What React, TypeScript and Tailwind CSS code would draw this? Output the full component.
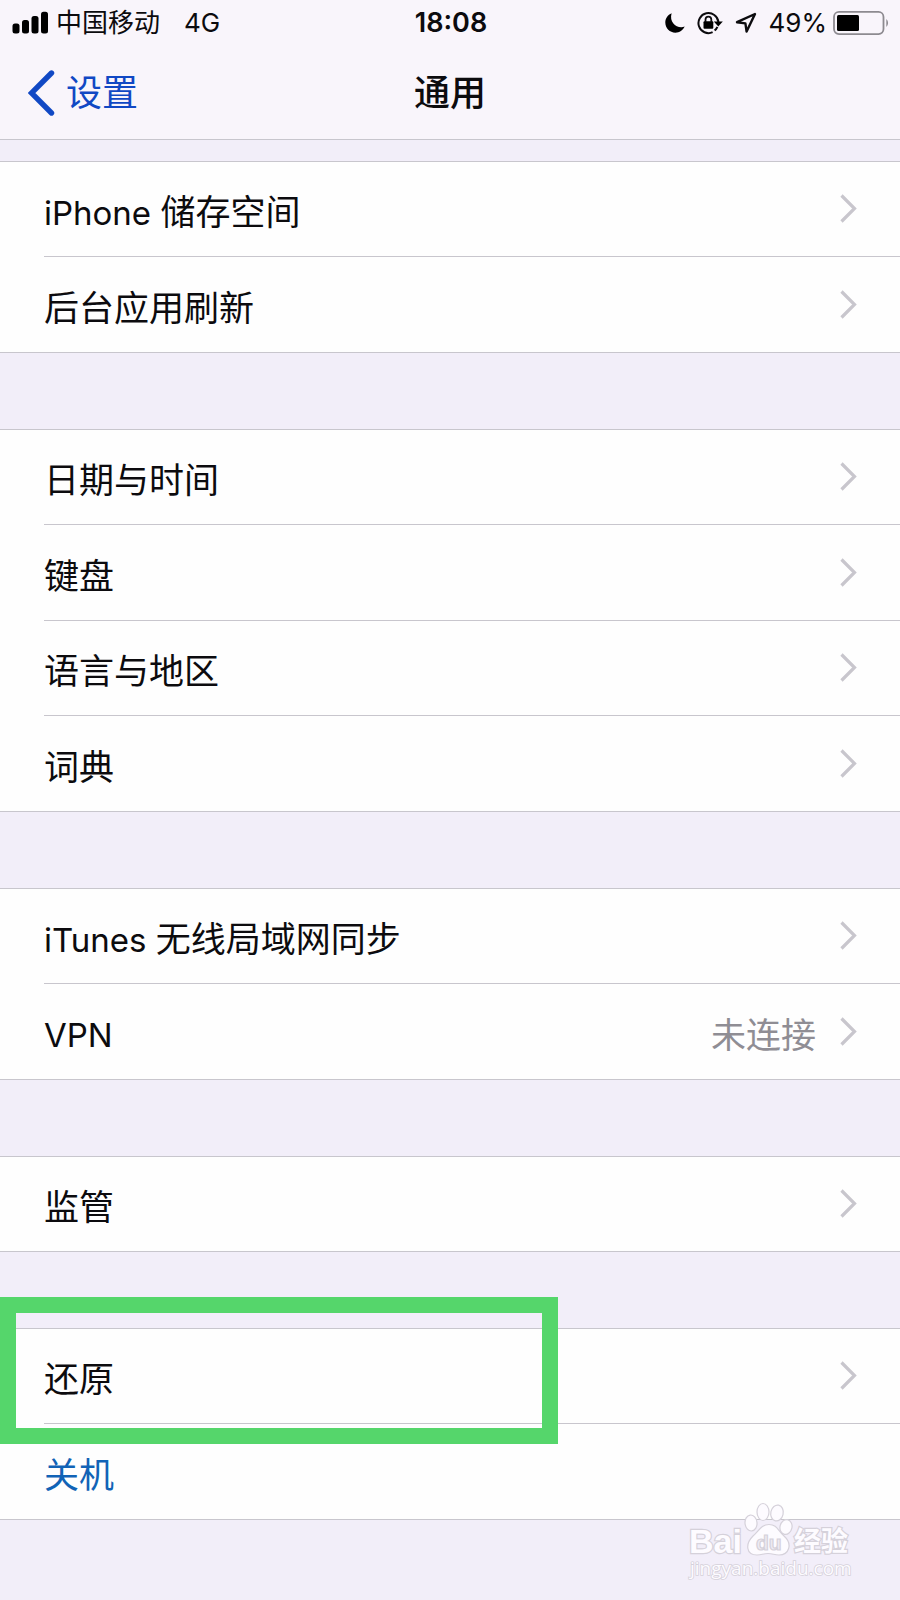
import type { ReactNode } from "react";

type Item = {
  label: string;
  value?: string;
  marked?: boolean;
  action?: boolean;
};

const groups: Item[][] = [
  [{ label: "iPhone 储存空间" }, { label: "后台应用刷新" }],
  [
    { label: "日期与时间" },
    { label: "键盘" },
    { label: "语言与地区" },
    { label: "词典" },
  ],
  [{ label: "iTunes 无线局域网同步" }, { label: "VPN", value: "未连接" }],
  [{ label: "监管" }],
  [{ label: "还原", marked: true }, { label: "关机", action: true }],
];

function SignalIcon() {
  return (
    <svg width="36" height="24" viewBox="0 0 36 24" aria-hidden="true">
      <rect x="0.5" y="12.5" width="7" height="10" rx="2.5" />
      <rect x="10" y="9" width="7" height="13.5" rx="2.5" />
      <rect x="19.5" y="5" width="7" height="17.5" rx="2.5" />
      <rect x="29" y="0.8" width="7" height="21.7" rx="2.5" />
    </svg>
  );
}

function MoonIcon() {
  return (
    <svg width="20" height="20" viewBox="0 0 20 20" aria-hidden="true">
      <path d="M6.6 0.3C2.8 1.9 0.3 5.5 0.3 9.6 0.3 15.2 4.8 19.7 10.4 19.7 14.5 19.7 18 17.3 19.7 13.6 12.5 16.2 3.8 10 6.6 0.3Z" />
    </svg>
  );
}

function RotationLockIcon() {
  return (
    <svg width="26" height="24" viewBox="0 0 26 24" aria-hidden="true">
      <path
        d="M15.6 21.2A10 10 0 1 1 21.4 11"
        fill="none"
        stroke="currentColor"
        strokeWidth="2"
      />
      <path d="M16.8 10.6H25.8L21.3 15.4Z" />
      <path
        d="M20.4 15.8A10 10 0 0 1 17.6 19.6"
        fill="none"
        stroke="currentColor"
        strokeWidth="2"
      />
      <rect x="6.5" y="10.2" width="9.8" height="7.6" rx="1" />
      <path
        d="M8.5 11V8.6A2.9 2.9 0 0 1 14.3 8.6V11"
        fill="none"
        stroke="currentColor"
        strokeWidth="1.8"
      />
    </svg>
  );
}

function LocationIcon() {
  return (
    <svg width="22" height="22" viewBox="0 0 22 22" aria-hidden="true">
      <path
        d="M20 2 2 10.2 10.4 11.4 11.6 19.6Z"
        fill="none"
        stroke="currentColor"
        strokeWidth="2.4"
        strokeLinejoin="round"
      />
    </svg>
  );
}

function BatteryIcon() {
  return (
    <svg width="57" height="24" viewBox="0 0 57 24" aria-hidden="true">
      <rect
        x="1"
        y="0.9"
        width="49.5"
        height="22.2"
        rx="5"
        fill="none"
        stroke="#8d8a90"
        strokeWidth="1.8"
      />
      <rect x="4" y="4" width="22" height="16" rx="1.5" />
      <path d="M53.3 8A5.4 5.4 0 0 1 53.3 16Z" fill="#8d8a90" />
    </svg>
  );
}

function BackIcon() {
  return (
    <svg width="28" height="46" viewBox="0 0 28 46" aria-hidden="true">
      <path
        d="M23.5 3 3.5 23 23.5 43"
        fill="none"
        stroke="currentColor"
        strokeWidth="5.4"
        strokeLinecap="round"
        strokeLinejoin="miter"
      />
    </svg>
  );
}

function ChevronIcon() {
  return (
    <svg
      width="18"
      height="30"
      viewBox="0 0 18 30"
      className="shrink-0 text-[#c8c6cd]"
      aria-hidden="true"
    >
      <path
        d="M1.5 1.5 14.5 14.5 1.5 27.5"
        fill="none"
        stroke="currentColor"
        strokeWidth="3.2"
      />
    </svg>
  );
}

function StatusBar() {
  return (
    <div className="flex h-[46px] items-center pr-2.5 pl-3 text-[26px] leading-8">
      <div className="flex flex-1 items-center gap-2">
        <SignalIcon />
        <span>中国移动</span>
        <span className="ml-4">4G</span>
      </div>
      <time className="text-[27px] font-semibold">18:08</time>
      <div className="flex flex-1 items-center justify-end gap-3">
        <MoonIcon />
        <RotationLockIcon />
        <LocationIcon />
        <div className="flex items-center gap-1.5">
          <span>49%</span>
          <BatteryIcon />
        </div>
      </div>
    </div>
  );
}

function NavBar() {
  return (
    <nav className="flex h-[93px] items-center px-7 text-[36px] leading-10">
      <div className="flex flex-1">
        <a href="#settings" className="flex items-center gap-2.5 text-[#1148c4]">
          <BackIcon />
          设置
        </a>
      </div>
      <h1 className="font-medium">通用</h1>
      <div className="flex-1" />
    </nav>
  );
}

// Latin words are set slightly smaller than the Chinese text next to them.
function Label({ text }: { text: string }) {
  const latin = text.match(/^[A-Za-z]+ ?/)?.[0] ?? "";
  return (
    <span className="pt-1.5 whitespace-pre">
      {latin ? <span className="text-[33px]">{latin}</span> : null}
      {text.slice(latin.length)}
    </span>
  );
}

function Row({ label, value, marked, action }: Item) {
  return (
    <li className="group relative pl-11 last:pl-0">
      <div className="flex h-[95px] items-center border-b border-[#c8c6cd] group-even:h-24 group-last:pl-11">
        {action ? (
          <button type="button" className="flex text-left text-[#1163b6]">
            <Label text={label} />
          </button>
        ) : (
          <a
            href={`#${label}`}
            className="flex flex-1 items-center justify-between pr-[42px]"
          >
            <Label text={label} />
            <span className="flex items-center gap-6 text-[#8f8d94]">
              {value ? <Label text={value} /> : null}
              <ChevronIcon />
            </span>
          </a>
        )}
      </div>
      {marked ? (
        <div className="pointer-events-none absolute -top-8 -bottom-5 left-0 z-10 w-[62%] border-16 border-[#55d66b]" />
      ) : null}
    </li>
  );
}

function Group({ children }: { children: ReactNode }) {
  return (
    <ul className="border-t border-[#c8c6cd] bg-[#fefefe]">{children}</ul>
  );
}

function Watermark() {
  return (
    <svg
      width="174"
      height="90"
      viewBox="0 0 174 90"
      className="absolute right-10 bottom-2.5"
      fill="#fdfbff"
      stroke="#d5d1da"
      strokeWidth="1.2"
      role="img"
      aria-label="Baidu 经验"
    >
      <g fontWeight="700" paintOrder="stroke" strokeWidth="2.4">
        <text x="3" y="53" fontSize="34" fontFamily="Liberation Sans">
          Bai
        </text>
        <text x="108" y="51" fontSize="27" fontFamily="Noto Sans CJK SC">
          经验
        </text>
      </g>
      <ellipse cx="65" cy="23" rx="6" ry="8" transform="rotate(-6 65 23)" />
      <ellipse cx="77" cy="12" rx="6" ry="8.5" />
      <ellipse cx="91" cy="13" rx="6.2" ry="8" transform="rotate(12 91 13)" />
      <ellipse cx="100" cy="27" rx="6" ry="7.5" transform="rotate(12 100 27)" />
      <path d="M83 24.5C91 24.5 92 31 98 36 107 44 103 55 93 55 88 55 87 53.5 82 53.5 77 53.5 76 55 71 55 60 55 59 44 67 36 73 31 75 24.5 83 24.5Z" />
      <text
        x="70"
        y="50"
        fontSize="21"
        fontWeight="700"
        fontFamily="Liberation Sans"
        fill="#eeebf3"
      >
        du
      </text>
      <text
        x="4"
        y="75"
        fontSize="19"
        fontFamily="Open Sans"
        paintOrder="stroke"
        strokeWidth="1.6"
      >
        jingyan.baidu.com
      </text>
    </svg>
  );
}

export default function App() {
  return (
    <div className="relative min-h-screen bg-[#f2eef9] font-['Inter','Noto_Sans_CJK_SC',sans-serif] text-[#0c0b0e]">
      <header className="border-b border-[#c8c6cd] bg-[#f9f5fb]">
        <StatusBar />
        <NavBar />
      </header>
      <main className="flex flex-col gap-[76px] pt-[21px] text-[35px] leading-10">
        {groups.map((items) => (
          <Group key={items[0].label}>
            {items.map((item) => (
              <Row key={item.label} {...item} />
            ))}
          </Group>
        ))}
      </main>
      <Watermark />
    </div>
  );
}
